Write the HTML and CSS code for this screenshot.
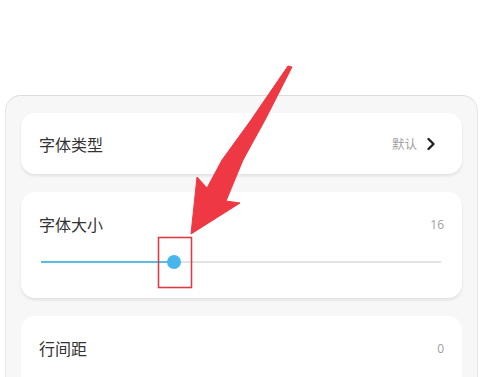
FILE: index.html
```html
<!DOCTYPE html>
<html lang="zh-CN">
<head>
<meta charset="utf-8">
<title>字体设置</title>
<link rel="stylesheet" href="styles.css">
</head>
<body>
<div class="page">
  <section class="panel">
    <div class="card card-row">
      <span class="label">字体类型</span>
      <span class="right">
        <span class="value-text">默认</span>
        <svg class="chevron" width="10" height="14" viewBox="0 0 10 14"><path d="M2.5 2 L7.5 7 L2.5 12" fill="none" stroke="#222" stroke-width="2.4" stroke-linecap="round" stroke-linejoin="round"/></svg>
      </span>
    </div>
    <div class="card card-slider">
      <div class="slider-head">
        <span class="label">字体大小</span>
        <span class="num">16</span>
      </div>
      <div class="slider">
        <span class="track-fill"></span><span class="thumb"></span>
      </div>
    </div>
    <div class="card card-last">
      <span class="label">行间距</span>
      <span class="num">0</span>
    </div>
  </section>
  <svg class="annot" width="483" height="377" viewBox="0 0 483 377">
    <polygon points="292,67 288,66 251,120 222,160 207,188 197,177 191,234 240,203 226,201 243,160 265,120" fill="#ee3843" stroke="#ee3843" stroke-width="1" stroke-linejoin="round"/>
    <rect x="158.5" y="237.5" width="33" height="50" fill="none" stroke="#dc3c46" stroke-width="1.6"/>
  </svg>
</div>
</body>
</html>
```
FILE: styles.css
```css
html, body {
  margin: 0;
  padding: 0;
  background: #ffffff;
}
body {
  width: 483px;
  height: 377px;
  overflow: hidden;
  font-family: "Noto Sans CJK SC", "Noto Sans", sans-serif;
}
.page {
  position: relative;
  width: 483px;
  height: 377px;
  overflow: hidden;
}
.panel {
  margin: 95px 0 0 5px;
  width: 473px;
  box-sizing: border-box;
  padding: 17px 15px 0 15px;
  background: #f7f7f7;
  border: 1px solid #e6e6e6;
  border-top-color: #dcdcdc;
  border-bottom: none;
  border-radius: 16px 16px 0 0;
  display: flex;
  flex-direction: column;
  gap: 18px;
  height: 300px;
}
.card {
  background: #ffffff;
  border-radius: 14px;
  box-shadow: 0 2px 3px rgba(0, 0, 0, 0.09);
  box-sizing: border-box;
  padding: 0 18px;
}
.card-row {
  height: 62px;
  display: flex;
  align-items: center;
  justify-content: space-between;
}
.label {
  font-size: 16px;
  color: #333333;
}
.right {
  display: flex;
  align-items: center;
  gap: 9px;
}
.value-text {
  font-size: 12.5px;
  color: #a3a3a3;
}
.chevron {
  display: block;
  margin-right: 8px;
}
.card-slider {
  height: 106px;
  padding-top: 20px;
}
.slider-head {
  display: flex;
  justify-content: space-between;
  align-items: center;
  height: 24px;
}
.num {
  font-size: 12px;
  color: #a0a0a0;
  font-family: "Open Sans", "Noto Sans", sans-serif;
}
.slider {
  margin: 19px 3px 0 2px;
  height: 14px;
  display: flex;
  align-items: center;
  background: linear-gradient(#e2e2e2, #e2e2e2) center / 100% 2px no-repeat;
}
.track-fill {
  display: block;
  width: 127px;
  height: 2px;
  background: #5bbce4;
}
.thumb {
  display: block;
  width: 14px;
  height: 14px;
  border-radius: 50%;
  background: #47b6ea;
  margin-left: -1px;
}
.card-last {
  height: 80px;
  display: flex;
  align-items: center;
  justify-content: space-between;
  padding-bottom: 14px;
  box-shadow: none;
}
.annot {
  position: absolute;
  top: 0;
  left: 0;
  pointer-events: none;
}
```
